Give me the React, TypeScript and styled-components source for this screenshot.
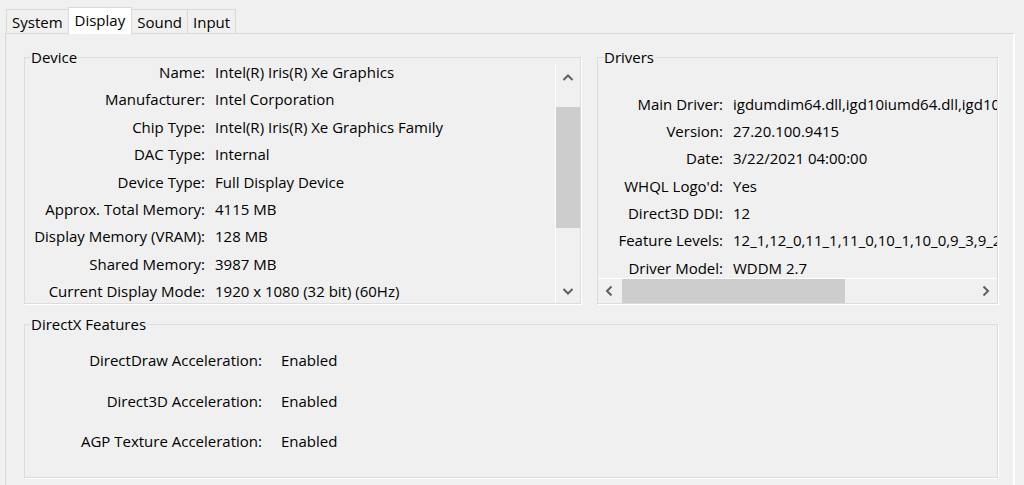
import styled, { createGlobalStyle } from "styled-components"

const GlobalStyle = createGlobalStyle`
  html, body {
    margin: 0;
    padding: 0;
    background: #f0f0f0;
  }
  body {
    font-family: "Open Sans", "Noto Sans", sans-serif;
    font-size: 15px;
    color: #000;
  }
  * {
    box-sizing: border-box;
  }
`

const Window = styled.div`
  width: 1024px;
  height: 485px;
  overflow: hidden;
  background: #f0f0f0;
`

const TabStrip = styled.div`
  display: flex;
  align-items: flex-end;
  height: 34px;
  padding-left: 7px;
  position: relative;
  z-index: 1;
`

const Tab = styled.div<{ $active?: boolean }>`
  height: ${(p) => (p.$active ? 27 : 25)}px;
  padding: 0 ${(p) => (p.$active ? 6 : 5)}px ${(p) => (p.$active ? 3 : 0)}px;
  margin-left: -1px;
  border: 1px solid #d9d9d9;
  border-bottom: ${(p) => (p.$active ? "none" : "1px solid #d9d9d9")};
  background: ${(p) => (p.$active ? "#fff" : "#f0f0f0")};
  display: flex;
  align-items: center;
  white-space: nowrap;
`

const Panel = styled.div`
  margin: -1px 0 0 5px;
  width: 1010px;
  height: 460px;
  border: 1px solid #d9d9d9;
  border-right: 2px solid #fff;
  border-bottom: none;
  padding: 15px 15px 0 18px;
  display: flex;
  flex-direction: column;
  gap: 12px;
`

const TopRow = styled.div`
  display: flex;
  gap: 16px;
`

const Group = styled.fieldset<{ $width?: number; $height: number }>`
  margin: 0;
  padding: 0;
  min-width: 0;
  width: ${(p) => (p.$width ? `${p.$width}px` : "auto")};
  height: ${(p) => p.$height}px;
  border: 1px solid #dcdcdc;
  box-shadow: 1px 1px 0 #fff;
  display: flex;
  flex-direction: column;
`

const Legend = styled.legend`
  margin-left: 5px;
  padding: 0 1px;
  line-height: 16px;
`

const GroupBody = styled.div<{ $dir?: "row" | "column" }>`
  flex: 1;
  min-height: 0;
  display: flex;
  flex-direction: ${(p) => p.$dir ?? "row"};
`

const List = styled.div<{ $offset?: number; $padTop?: number; $clip?: boolean }>`
  flex: 1;
  min-width: 0;
  min-height: 0;
  overflow: ${(p) => (p.$clip ? "hidden" : "visible")};
  padding-top: ${(p) => p.$padTop ?? 0}px;

  & > :first-child {
    margin-top: ${(p) => p.$offset ?? 0}px;
  }
`

const InfoRow = styled.div<{ $label: number; $gap: number; $height: number }>`
  display: grid;
  grid-template-columns: ${(p) => p.$label}px max-content;
  column-gap: ${(p) => p.$gap}px;
  height: ${(p) => p.$height}px;
  align-items: center;
  white-space: nowrap;
  line-height: 14px;
`

const Label = styled.span`
  text-align: right;
`

const Value = styled.span``

const VScroll = styled.div`
  width: 25px;
  border-left: 1px solid #fff;
  display: flex;
  flex-direction: column;
`

const HScroll = styled.div`
  height: 25px;
  border-top: 1px solid #fff;
  display: flex;
`

const ArrowButton = styled.div<{ $size: number }>`
  flex: 0 0 ${(p) => p.$size}px;
  display: flex;
  align-items: center;
  justify-content: center;
`

const Track = styled.div<{ $dir: "row" | "column" }>`
  flex: 1;
  display: flex;
  flex-direction: ${(p) => p.$dir};
`

const Thumb = styled.div<{ $start: number; $length: number; $dir: "row" | "column" }>`
  background: #cdcdcd;
  ${(p) =>
    p.$dir === "column"
      ? `margin-top: ${p.$start}px; height: ${p.$length}px; width: 100%;`
      : `margin-left: ${p.$start}px; width: ${p.$length}px; height: 100%;`}
`

const Chevron = ({ dir }: { dir: "up" | "down" | "left" | "right" }) => {
  const vertical = dir === "up" || dir === "down"
  const pts = {
    up: "1.5,7 6,2.5 10.5,7",
    down: "1.5,3 6,7.5 10.5,3",
    left: "7.5,1.5 3,6 7.5,10.5",
    right: "3.5,1.5 8,6 3.5,10.5",
  }[dir]
  return (
    <svg width="12" height={vertical ? 10 : 12} viewBox={vertical ? "0 0 12 10" : "0 0 12 12"}>
      <polyline points={pts} fill="none" stroke="#606060" strokeWidth="2" />
    </svg>
  )
}

const device: [string, string][] = [
  ["Name:", "Intel(R) Iris(R) Xe Graphics"],
  ["Manufacturer:", "Intel Corporation"],
  ["Chip Type:", "Intel(R) Iris(R) Xe Graphics Family"],
  ["DAC Type:", "Internal"],
  ["Device Type:", "Full Display Device"],
  ["Approx. Total Memory:", "4115 MB"],
  ["Display Memory (VRAM):", "128 MB"],
  ["Shared Memory:", "3987 MB"],
  ["Current Display Mode:", "1920 x 1080 (32 bit) (60Hz)"],
]

const drivers: [string, string][] = [
  ["Main Driver:", "igdumdim64.dll,igd10iumd64.dll,igd10iumd64.dll,igd12umd64.dll"],
  ["Version:", "27.20.100.9415"],
  ["Date:", "3/22/2021 04:00:00"],
  ["WHQL Logo'd:", "Yes"],
  ["Direct3D DDI:", "12"],
  ["Feature Levels:", "12_1,12_0,11_1,11_0,10_1,10_0,9_3,9_2,9_1"],
  ["Driver Model:", "WDDM 2.7"],
]

const features: [string, string][] = [
  ["DirectDraw Acceleration:", "Enabled"],
  ["Direct3D Acceleration:", "Enabled"],
  ["AGP Texture Acceleration:", "Enabled"],
]

export default function App() {
  return (
    <Window>
      <GlobalStyle />
      <TabStrip>
        <Tab>System</Tab>
        <Tab $active>Display</Tab>
        <Tab>Sound</Tab>
        <Tab>Input</Tab>
      </TabStrip>

      <Panel>
        <TopRow>
          <Group $width={557} $height={255}>
            <Legend>Device</Legend>
            <GroupBody>
              <List $offset={-6.7}>
                {device.map(([k, v]) => (
                  <InfoRow key={k} $label={180} $gap={10} $height={27.375}>
                    <Label>{k}</Label>
                    <Value>{v}</Value>
                  </InfoRow>
                ))}
              </List>
              <VScroll>
                <ArrowButton $size={26}>
                  <Chevron dir="up" />
                </ArrowButton>
                <Track $dir="column">
                  <Thumb $dir="column" $start={16} $length={121} />
                </Track>
                <ArrowButton $size={24}>
                  <Chevron dir="down" />
                </ArrowButton>
              </VScroll>
            </GroupBody>
          </Group>

          <Group $width={401} $height={255}>
            <Legend>Drivers</Legend>
            <GroupBody $dir="column">
              <List $padTop={25} $clip>
                {drivers.map(([k, v]) => (
                  <InfoRow key={k} $label={125} $gap={10} $height={27.33}>
                    <Label>{k}</Label>
                    <Value>{v}</Value>
                  </InfoRow>
                ))}
              </List>
              <HScroll>
                <ArrowButton $size={23}>
                  <Chevron dir="left" />
                </ArrowButton>
                <Track $dir="row">
                  <Thumb $dir="row" $start={1} $length={223} />
                </Track>
                <ArrowButton $size={23}>
                  <Chevron dir="right" />
                </ArrowButton>
              </HScroll>
            </GroupBody>
          </Group>
        </TopRow>

        <Group $height={162}>
          <Legend>DirectX Features</Legend>
          <GroupBody $dir="column">
            <List $padTop={8}>
              {features.map(([k, v]) => (
                <InfoRow key={k} $label={237} $gap={19} $height={40.5}>
                  <Label>{k}</Label>
                  <Value>{v}</Value>
                </InfoRow>
              ))}
            </List>
          </GroupBody>
        </Group>
      </Panel>
    </Window>
  )
}
